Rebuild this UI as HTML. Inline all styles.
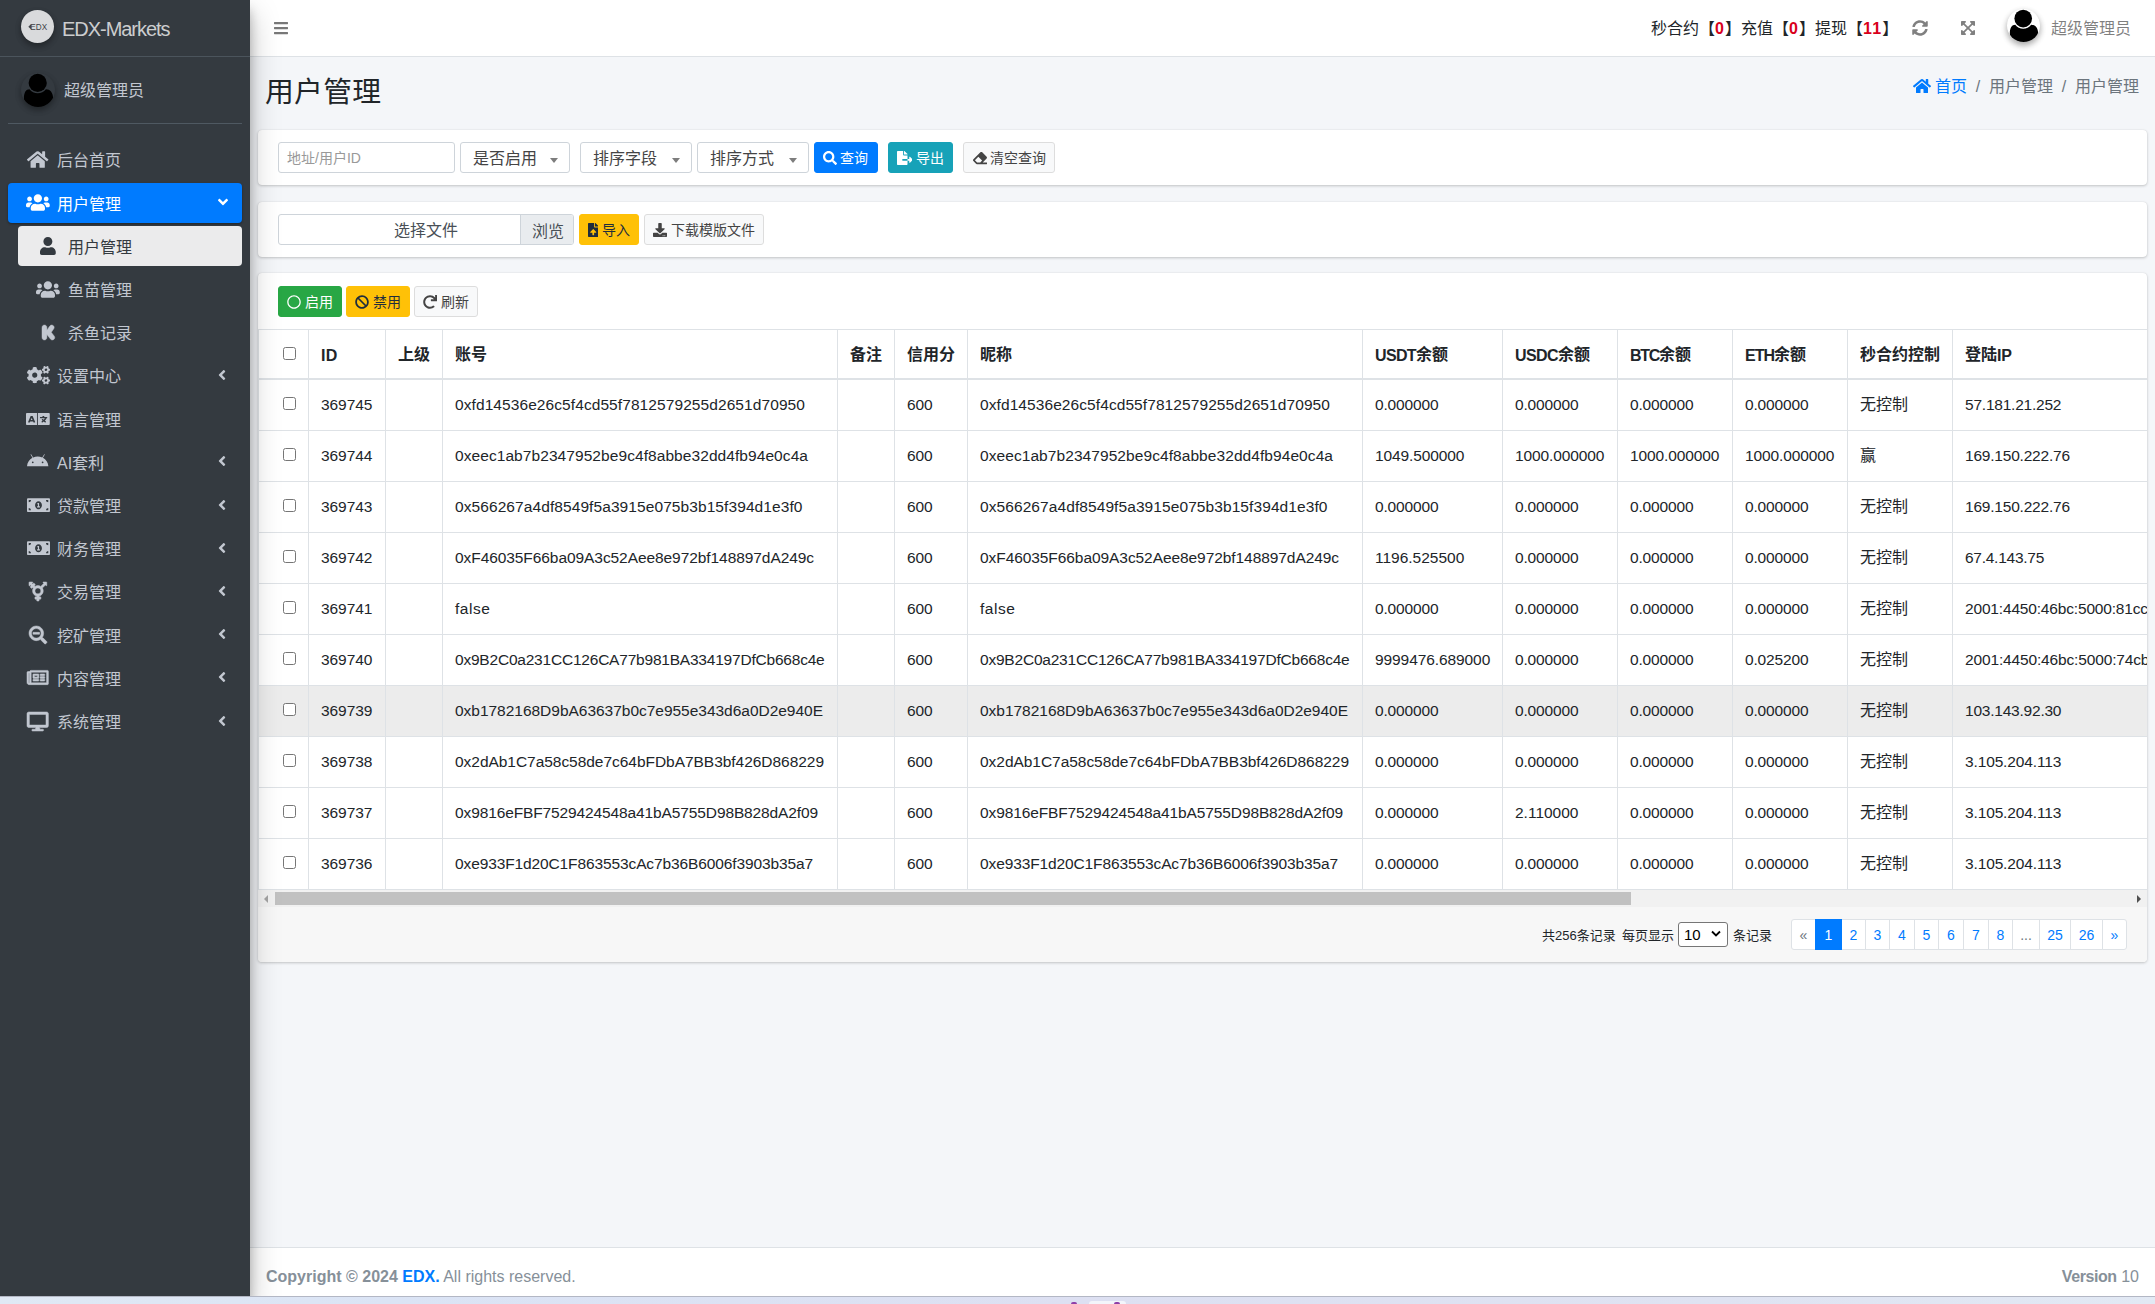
<!DOCTYPE html>
<html lang="zh-CN">
<head>
<meta charset="utf-8">
<title>用户管理</title>
<style>
*{box-sizing:border-box}
html,body{margin:0;padding:0}
body{width:2155px;height:1304px;overflow:hidden;position:relative;background:#f4f6f9;color:#212529;
 font-family:"Liberation Sans","Noto Sans CJK SC",sans-serif;font-size:16px;line-height:1.5}
svg{display:block}
.abs{position:absolute}
/* ---------- sidebar ---------- */
#sidebar{position:absolute;left:0;top:0;width:250px;height:1296px;background:#343a40;z-index:30;
 box-shadow:0 14px 28px rgba(0,0,0,.25),0 10px 10px rgba(0,0,0,.22)}
#brand{position:absolute;left:0;top:0;width:250px;height:57px;border-bottom:1px solid #4b545c}
#brand .logo{position:absolute;left:21px;top:10px;width:33px;height:33px;border-radius:50%;background:#d9dadc;
 box-shadow:0 3px 6px rgba(0,0,0,.16),0 3px 6px rgba(0,0,0,.23)}
#brand .logo span{position:absolute;left:0;top:0;width:33px;height:33px;line-height:33px;text-align:center;font-size:8px;font-weight:bold;color:#444;letter-spacing:-.2px}
#brand .name{position:absolute;left:62px;top:14.400px;font-size:20px;line-height:30px;font-weight:300;color:rgba(255,255,255,.76);white-space:nowrap}
#upanel{position:absolute;left:8px;top:57px;width:234px;height:67px;border-bottom:1px solid #4f5962}
#upanel .av{position:absolute;left:12.500px;top:15.500px;width:34px;height:34px;border-radius:50%;background:#343a40;overflow:hidden;
 box-shadow:0 3px 6px rgba(0,0,0,.16),0 3px 6px rgba(0,0,0,.23)}
#upanel .nm{position:absolute;left:56px;top:22.400px;line-height:24px;color:#c2c7d0;white-space:nowrap}
.nav-i{position:absolute;left:8px;width:234px;height:40px;border-radius:4px;color:#c2c7d0;white-space:nowrap}
.nav-i .ic{position:absolute;left:17px;top:9.500px;width:26px;height:20px;display:flex;align-items:center;justify-content:center}
.nav-i .ic svg{fill:currentColor;overflow:visible}
.nav-i .tx{position:absolute;left:49px;top:9.400px;line-height:24px}
.nav-i .ar{position:absolute;right:16px;top:11px;width:8px;height:16px}
.nav-i .ar svg{height:16px;fill:currentColor}
.nav-i.act{background:#007bff;color:#fff;box-shadow:0 1px 3px rgba(0,0,0,.12),0 1px 2px rgba(0,0,0,.24)}
.nav-i.sub{left:18px;width:224px}
.nav-i.sub .ic{left:17px}
.nav-i.sub .tx{left:50px}
.nav-i.sub.act{background:rgba(255,255,255,.9);color:#343a40;box-shadow:none}
/* ---------- topbar ---------- */
#topbar{position:absolute;left:250px;top:0;width:1905px;height:57px;background:#fff;border-bottom:1px solid #dee2e6;z-index:10}
#topbar .t{position:absolute;white-space:nowrap}
/* ---------- content ---------- */
.card{position:absolute;left:258px;width:1889px;background:#fff;border-radius:4px;
 box-shadow:0 0 1px rgba(0,0,0,.125),0 1px 3px rgba(0,0,0,.2)}
.btn{position:absolute;height:31px;border-radius:3px;font-size:14px;line-height:21px;padding:4px 0 0 0;white-space:nowrap;border:1px solid transparent;text-align:left}
.btn svg{position:absolute;fill:currentColor}
.btn span{position:absolute;top:5px}
.fc{position:absolute;height:31px;border:1px solid #ced4da;border-radius:3px;background:#fff}
#footer{position:absolute;left:250px;top:1247px;width:1905px;height:49px;background:#fff;border-top:1px solid #dee2e6;color:#869099}
#osbar{position:absolute;left:0;top:1296px;width:2155px;height:8px;background:linear-gradient(90deg,#e0e9f5 0,#dbe4f5 18%,#dde0f2 50%,#dfe3f2 80%,#e2e9f4 100%);border-top:1px solid #b3b7c4;z-index:40}
#osbar i{position:absolute;display:block}

#tw{position:absolute;left:0;top:56px;width:1889px;height:561px;overflow:hidden}
#tb{table-layout:fixed;border-collapse:separate;border-spacing:0;width:1889px}
#tb th,#tb td{border-left:1px solid #dee2e6;border-top:1px solid #dee2e6;padding:0 0 0 12px;height:51px;white-space:nowrap;overflow:hidden;text-align:left;vertical-align:middle;color:#212529;font-size:16px;line-height:24px}
#tb th{height:51px;border-bottom:2px solid #dee2e6;font-weight:bold;padding-top:2px}
#tb th .cb{margin-bottom:4px}
#tb tbody tr:first-child td{border-top:0;height:50px}
#tb tbody tr:last-child td{border-bottom:1px solid #dee2e6;height:52px}
#tb tr.hov td{background:#ececec}
.cb{display:block;width:13px;height:13px;border:1px solid #767676;border-radius:2.500px;background:#fff;margin:0 0 3px 12px}
#sb{position:absolute;left:0;top:617px;width:1889px;height:17px;background:#f1f1f1}
#sb .th{position:absolute;left:17px;top:2px;width:1356px;height:13px;background:#c1c1c1}
#sb .al{position:absolute;left:6px;top:4.500px;width:0;height:0;border-top:4px solid transparent;border-bottom:4px solid transparent;border-right:4px solid #a3a3a3}
#sb .arr{position:absolute;right:6px;top:4.500px;width:0;height:0;border-top:4px solid transparent;border-bottom:4px solid transparent;border-left:4px solid #505050}
#cf{position:absolute;left:0;top:634px;width:1889px;height:55px;background:#f7f7f7;border-radius:0 0 4px 4px}
#pg{position:absolute;left:1533px;top:12px;height:31px}
.pi{position:absolute;top:0;height:31px;border:1px solid #dee2e6;background:#fff;color:#007bff;font-size:14px;line-height:31px;text-align:center}
.pi.first{border-radius:3px 0 0 3px}.pi.last{border-radius:0 3px 3px 0}
.pi.dis{color:#6c757d}
.pi.on{background:#007bff;border-color:#007bff;color:#fff;z-index:2}
</style>
</head>
<body>
<!-- SIDEBAR -->
<div id="sidebar">
 <div id="brand"><div class="logo"><svg width="33" height="33" viewBox="0 0 33 33"><polygon points="7.300,16.800 10.200,14 10.200,19.600" fill="#45484d"/><text x="9.300" y="19.800" font-family="Liberation Sans,sans-serif" font-size="8.400" fill="#3f4247" textLength="16.800" lengthAdjust="spacingAndGlyphs">EDX</text></svg></div><div class="name"><span style="letter-spacing:-1.037px">EDX-Markets</span></div></div>
 <div id="upanel">
  <div class="av"><svg width="34" height="34" viewBox="0 0 34 34"><circle cx="16.7" cy="9.9" r="9.1" fill="#000"/><path d="M2.900 25.500C2.900 19.500 5 16.300 8.500 16.300A10.400 10.400 0 0 0 24.900 16.300C29 16.300 32.100 19.500 32.100 25.500C32.100 31 25 34.500 17.500 34.500C10 34.500 2.900 31 2.900 25.500Z" fill="#000"/></svg></div>
  <div class="nm">超级管理员</div>
 </div>
 <div class="nav-i " style="top:140.0px"><div class="ic"><svg width="21.38" height="19" viewBox="0 0 576 512" style="margin:0 auto"><path d="M280.37 148.26L96 300.11V464a16 16 0 0 0 16 16l112.060-.290a16 16 0 0 0 15.920-16V368a16 16 0 0 1 16-16h64a16 16 0 0 1 16 16v95.640a16 16 0 0 0 16 16.050L464 480a16 16 0 0 0 16-16V300L295.670 148.260a12.190 12.190 0 0 0-15.300 0zM571.600 251.470L488 182.560V44.050a12 12 0 0 0-12-12h-56a12 12 0 0 0-12 12v72.610L318.470 43a48 48 0 0 0-61 0L4.340 251.470a12 12 0 0 0-1.600 16.900l25.500 31A12 12 0 0 0 45.150 301l235.220-193.740a12.190 12.190 0 0 1 15.300 0L530.900 301a12 12 0 0 0 16.900-1.600l25.500-31a12 12 0 0 0-1.700-16.930z"/></svg></div><div class="tx">后台首页</div></div>
 <div class="nav-i act" style="top:183.2px"><div class="ic"><svg width="23.75" height="19" viewBox="0 0 640 512" style="margin:0 auto"><path d="M96 224c35.300 0 64-28.700 64-64s-28.700-64-64-64-64 28.700-64 64 28.700 64 64 64zm448 0c35.300 0 64-28.700 64-64s-28.700-64-64-64-64 28.700-64 64 28.700 64 64 64zm32 32h-64c-17.600 0-33.500 7.100-45.100 18.600 40.300 22.100 68.900 62 75.100 109.400h66c17.700 0 32-14.300 32-32v-32c0-35.300-28.700-64-64-64zm-256 0c61.900 0 112-50.100 112-112S381.900 32 320 32 208 82.100 208 144s50.100 112 112 112zm76.800 32h-8.300c-20.800 10-43.900 16-68.500 16s-47.600-6-68.500-16h-8.300C179.600 288 128 339.600 128 403.200V432c0 26.500 21.500 48 48 48h288c26.500 0 48-21.500 48-48v-28.800c0-63.600-51.600-115.200-115.200-115.200zm-223.700-13.400C161.500 263.100 145.600 256 128 256H64c-35.300 0-64 28.700-64 64v32c0 17.700 14.300 32 32 32h65.900c6.300-47.400 34.900-87.300 75.200-109.400z"/></svg></div><div class="tx">用户管理</div><div class="ar" style="right:14px;width:10px"><svg width="10.0" height="16" viewBox="0 0 320 512"><path d="M143 352.3L7 216.3c-9.4-9.4-9.4-24.6 0-33.9l22.6-22.6c9.4-9.4 24.6-9.4 33.9 0l96.4 96.4 96.4-96.4c9.4-9.4 24.6-9.4 33.9 0l22.6 22.6c9.4 9.4 9.4 24.6 0 33.9l-136 136c-9.2 9.4-24.4 9.4-33.800 0z"/></svg></div></div>
 <div class="nav-i sub act" style="top:226.4px"><div class="ic"><svg width="15.75" height="18" viewBox="0 0 448 512" style="margin:0 auto"><path d="M224 256c70.7 0 128-57.3 128-128S294.7 0 224 0 96 57.3 96 128s57.3 128 128 128zm89.6 32h-16.7c-22.2 10.2-46.9 16-72.9 16s-50.600-5.800-72.900-16h-16.700C60.200 288 0 348.200 0 422.400V464c0 26.500 21.500 48 48 48h352c26.500 0 48-21.500 48-48v-41.600c0-74.200-60.200-134.400-134.400-134.400z"/></svg></div><div class="tx">用户管理</div></div>
 <div class="nav-i sub" style="top:269.6px"><div class="ic"><svg width="23.75" height="19" viewBox="0 0 640 512" style="margin:0 auto"><path d="M96 224c35.300 0 64-28.700 64-64s-28.700-64-64-64-64 28.700-64 64 28.700 64 64 64zm448 0c35.300 0 64-28.700 64-64s-28.700-64-64-64-64 28.700-64 64 28.700 64 64 64zm32 32h-64c-17.600 0-33.500 7.100-45.100 18.600 40.300 22.100 68.900 62 75.100 109.400h66c17.700 0 32-14.300 32-32v-32c0-35.300-28.700-64-64-64zm-256 0c61.900 0 112-50.100 112-112S381.900 32 320 32 208 82.100 208 144s50.100 112 112 112zm76.800 32h-8.300c-20.800 10-43.900 16-68.500 16s-47.600-6-68.500-16h-8.300C179.600 288 128 339.600 128 403.200V432c0 26.500 21.500 48 48 48h288c26.500 0 48-21.500 48-48v-28.800c0-63.600-51.600-115.200-115.200-115.200zm-223.700-13.400C161.500 263.100 145.600 256 128 256H64c-35.300 0-64 28.700-64 64v32c0 17.700 14.300 32 32 32h65.900c6.300-47.400 34.900-87.300 75.200-109.400z"/></svg></div><div class="tx">鱼苗管理</div></div>
 <div class="nav-i sub" style="top:312.8px"><div class="ic"><svg width="12.75" height="17" viewBox="0 0 384 512" style="margin:0 auto"><path stroke="currentColor" stroke-width="14" d="M147.300 114.400c0-56.200-32.500-82.400-73.400-82.400C26.200 32 0 68.200 0 113.400v283c0 47.300 25.300 83.400 74.900 83.400 39.800 0 72.400-25.600 72.400-83.400v-76.500l112.100 138.300c22.700 27.200 72.100 30.700 103.200 0 27-27.600 27.300-67.400 7.400-92.200l-90.800-114.800 74.900-107.400c17.400-24.700 17.500-63.100-10.400-89.800-30.300-29-82.400-31.600-113.600 12.800L147.300 185v-70.600z"/></svg></div><div class="tx">杀鱼记录</div></div>
 <div class="nav-i " style="top:356.0px"><div class="ic"><svg width="23.0" height="18.4" viewBox="0 0 640 512" style="margin:0 auto"><path d="M512.100 191l-8.200 14.300c-3 5.300-9.400 7.500-15.100 5.400-11.800-4.400-22.600-10.700-32.100-18.600-4.600-3.800-5.800-10.500-2.800-15.700l8.200-14.300c-6.900-8-12.300-17.300-15.900-27.400h-16.500c-6 0-11.200-4.300-12.200-10.300-2-12-2.100-24.600 0-37.100 1-6 6.200-10.400 12.200-10.400h16.500c3.600-10.100 9-19.400 15.900-27.400l-8.200-14.300c-3-5.200-1.900-11.900 2.800-15.700 9.500-7.900 20.400-14.200 32.100-18.600 5.700-2.100 12.100.1 15.100 5.400l8.200 14.300c10.500-1.900 21.200-1.900 31.700 0L552 6.300c3-5.300 9.400-7.500 15.100-5.400 11.800 4.400 22.600 10.700 32.100 18.600 4.600 3.800 5.800 10.500 2.800 15.700l-8.200 14.300c6.900 8 12.300 17.300 15.900 27.400h16.500c6 0 11.200 4.300 12.200 10.300 2 12 2.100 24.600 0 37.100-1 6-6.200 10.400-12.200 10.400h-16.500c-3.600 10.100-9 19.400-15.900 27.400l8.200 14.300c3 5.200 1.900 11.900-2.800 15.700-9.500 7.900-20.400 14.200-32.100 18.600-5.700 2.100-12.100-.1-15.100-5.400l-8.200-14.300c-10.400 1.900-21.200 1.900-31.700 0zm-10.500-58.800c38.500 29.600 82.400-14.300 52.800-52.800-38.500-29.700-82.400 14.300-52.800 52.800zM386.300 286.100l33.700 16.800c10.100 5.800 14.500 18.100 10.500 29.100-8.900 24.200-26.400 46.400-42.600 65.800-7.400 8.900-20.200 11.100-30.300 5.300l-29.100-16.800c-16 13.700-34.600 24.600-54.900 31.700v33.600c0 11.600-8.300 21.600-19.700 23.600-24.600 4.200-50.400 4.400-75.900 0-11.500-2-20-11.900-20-23.600V418c-20.300-7.200-38.900-18-54.900-31.700L74 403c-10 5.800-22.900 3.600-30.300-5.300-16.200-19.400-33.300-41.600-42.200-65.700-4-10.900.4-23.200 10.500-29.100l33.300-16.800c-3.900-20.900-3.900-42.400 0-63.400L12 205.800c-10.100-5.800-14.600-18.100-10.500-29 8.900-24.200 26-46.400 42.200-65.800 7.400-8.900 20.200-11.100 30.300-5.300l29.100 16.800c16-13.700 34.600-24.600 54.900-31.700V57.100c0-11.500 8.200-21.500 19.600-23.500 24.600-4.200 50.500-4.400 76-.1 11.500 2 20 11.900 20 23.600v33.600c20.300 7.200 38.900 18 54.900 31.700l29.100-16.800c10-5.800 22.900-3.600 30.300 5.300 16.200 19.400 33.200 41.600 42.100 65.800 4 10.900.1 23.200-10 29.100l-33.700 16.800c3.900 21 3.900 42.500 0 63.500zm-117.600 21.100c59.200-77-28.700-164.900-105.700-105.700-59.200 77 28.700 164.900 105.700 105.700zm243.400 182.700l-8.200 14.300c-3 5.300-9.400 7.500-15.100 5.400-11.800-4.400-22.600-10.700-32.100-18.600-4.600-3.800-5.800-10.500-2.800-15.700l8.200-14.300c-6.900-8-12.300-17.300-15.900-27.400h-16.500c-6 0-11.200-4.300-12.200-10.300-2-12-2.100-24.600 0-37.100 1-6 6.200-10.400 12.200-10.400h16.500c3.600-10.100 9-19.400 15.900-27.400l-8.200-14.300c-3-5.200-1.900-11.900 2.800-15.700 9.500-7.900 20.400-14.200 32.100-18.600 5.700-2.100 12.100.1 15.100 5.400l8.200 14.300c10.500-1.900 21.200-1.900 31.700 0l8.200-14.300c3-5.300 9.400-7.500 15.100-5.400 11.800 4.400 22.600 10.700 32.100 18.600 4.600 3.800 5.800 10.500 2.800 15.700l-8.200 14.300c6.900 8 12.300 17.300 15.900 27.400h16.500c6 0 11.200 4.300 12.200 10.300 2 12 2.100 24.600 0 37.100-1 6-6.200 10.400-12.200 10.400h-16.500c-3.600 10.100-9 19.400-15.900 27.400l8.200 14.300c3 5.200 1.900 11.900-2.800 15.700-9.500 7.900-20.400 14.200-32.100 18.600-5.700 2.100-12.100-.1-15.100-5.400l-8.200-14.300c-10.400 1.900-21.200 1.900-31.700 0zM501.600 431c38.500 29.600 82.400-14.300 52.800-52.800-38.500-29.600-82.400 14.300-52.800 52.800z"/></svg></div><div class="tx">设置中心</div><div class="ar"><svg width="8.0" height="16" viewBox="0 0 256 512"><path d="M31.7 239l136-136c9.4-9.4 24.6-9.4 33.9 0l22.6 22.6c9.4 9.4 9.4 24.6 0 33.9L127.9 256l96.4 96.4c9.4 9.4 9.4 24.6 0 33.9L201.7 409c-9.4 9.4-24.6 9.4-33.9 0l-136-136c-9.5-9.4-9.5-24.6-.1-34z"/></svg></div></div>
 <div class="nav-i " style="top:399.2px"><div class="ic"><svg width="23.75" height="15.96" viewBox="0 0 640 512" preserveAspectRatio="none" style="margin:0 auto"><path fill-rule="evenodd" d="M24 64h272v384H24c-13.300 0-24-10.700-24-24V88c0-13.300 10.700-24 24-24zM616 64H320v384h296c13.300 0 24-10.700 24-24V88c0-13.300-10.700-24-24-24zM134 160h36c5 0 9.600 3.200 11.300 7.900l66 184c2.800 7.800-3 16.100-11.300 16.100h-24.700c-5.200 0-9.800-3.300-11.400-8.300L191.700 336h-79.400l-8.200 23.700c-1.600 5-6.200 8.300-11.400 8.300H68c-8.300 0-14.100-8.300-11.300-16.100l66-184c1.700-4.700 6.300-7.900 11.300-7.900zm18 62.200L127.600 292h48.800L152 222.200zM456 160h24c6.600 0 12 5.400 12 12v20h68c6.600 0 12 5.400 12 12v16c0 6.600-5.400 12-12 12h-6.400c-9 27-24.600 54-46 78.600 8.800 8.200 18 16 27.500 23.100 4.900 3.700 6.200 10.500 3.100 15.700l-8.100 13.900c-3.600 6.200-11.800 7.900-17.600 3.600-12.500-9.200-24.100-18.800-34.900-28.800-10.800 10-22.500 19.600-34.900 28.800-5.800 4.300-14 2.600-17.600-3.600l-8.100-13.900c-3.100-5.300-1.700-12 3.200-15.700 9.800-7.400 19-15.100 27.600-23.100-8.400-9.600-15.800-19.600-22.300-29.700-4-6.300-1.100-14.700 5.900-17.200l14.500-5.200c5.100-1.800 10.800 0 13.900 4.500 4.800 7.100 10.200 14.100 16.200 20.900 14-16.500 24.700-34.100 31.800-51.900H388c-6.600 0-12-5.400-12-12v-16c0-6.600 5.400-12 12-12h56v-20c0-6.600 5.400-12 12-12z"/></svg></div><div class="tx">语言管理</div></div>
 <div class="nav-i " style="top:442.4px"><div class="ic"><svg width="21.38" height="19" viewBox="0 0 576 512" style="margin:0 auto"><path d="M420.550 301.930a24 24 0 1 1 24-24 24 24 0 0 1-24 24m-265.100 0a24 24 0 1 1 24-24 24 24 0 0 1-24 24m273.700-144.480l47.940-83a10 10 0 1 0-17.270-10l-48.540 84.070a301.250 301.250 0 0 0-246.560 0l-48.540-84.070a10 10 0 1 0-17.270 10l47.940 83C64.530 202.220 8.240 285.550 0 384h576c-8.240-98.450-64.540-181.780-146.850-226.550"/></svg></div><div class="tx">AI套利</div><div class="ar"><svg width="8.0" height="16" viewBox="0 0 256 512"><path d="M31.7 239l136-136c9.4-9.4 24.6-9.4 33.9 0l22.6 22.6c9.4 9.4 9.4 24.6 0 33.9L127.9 256l96.4 96.4c9.4 9.4 9.4 24.6 0 33.9L201.7 409c-9.4 9.4-24.6 9.4-33.9 0l-136-136c-9.5-9.4-9.5-24.6-.1-34z"/></svg></div></div>
 <div class="nav-i " style="top:485.6px"><div class="ic"><svg width="23.0" height="18.4" viewBox="0 0 640 512" style="margin:0 auto"><path d="M352 288h-16v-88c0-4.420-3.580-8-8-8h-13.580c-4.740 0-9.370 1.400-13.310 4.030l-15.330 10.220a7.994 7.994 0 0 0-2.220 11.090l8.880 13.310a7.994 7.994 0 0 0 11.090 2.220l.470-.310V288h-16c-4.420 0-8 3.580-8 8v16c0 4.420 3.580 8 8 8h64c4.420 0 8-3.580 8-8v-16c0-4.420-3.580-8-8-8zM608 64H32C14.330 64 0 78.330 0 96v320c0 17.670 14.330 32 32 32h576c17.670 0 32-14.330 32-32V96c0-17.670-14.330-32-32-32zM48 400v-64c35.350 0 64 28.650 64 64H48zm0-224v-64h64c0 35.350-28.650 64-64 64zm272 192c-53.020 0-96-50.150-96-112 0-61.860 42.980-112 96-112s96 50.140 96 112c0 61.870-43 112-96 112zm272 32h-64c0-35.350 28.650-64 64-64v64zm0-224c-35.350 0-64-28.650-64-64h64v64z"/></svg></div><div class="tx">贷款管理</div><div class="ar"><svg width="8.0" height="16" viewBox="0 0 256 512"><path d="M31.7 239l136-136c9.4-9.4 24.6-9.4 33.9 0l22.6 22.6c9.4 9.4 9.4 24.6 0 33.9L127.9 256l96.4 96.4c9.4 9.4 9.4 24.6 0 33.9L201.7 409c-9.4 9.4-24.6 9.4-33.9 0l-136-136c-9.5-9.4-9.5-24.6-.1-34z"/></svg></div></div>
 <div class="nav-i " style="top:528.8px"><div class="ic"><svg width="23.0" height="18.4" viewBox="0 0 640 512" style="margin:0 auto"><path d="M352 288h-16v-88c0-4.420-3.580-8-8-8h-13.580c-4.740 0-9.370 1.400-13.310 4.030l-15.330 10.220a7.994 7.994 0 0 0-2.220 11.090l8.880 13.310a7.994 7.994 0 0 0 11.090 2.220l.470-.310V288h-16c-4.420 0-8 3.580-8 8v16c0 4.420 3.580 8 8 8h64c4.420 0 8-3.580 8-8v-16c0-4.420-3.580-8-8-8zM608 64H32C14.330 64 0 78.330 0 96v320c0 17.670 14.330 32 32 32h576c17.670 0 32-14.330 32-32V96c0-17.670-14.330-32-32-32zM48 400v-64c35.350 0 64 28.650 64 64H48zm0-224v-64h64c0 35.350-28.650 64-64 64zm272 192c-53.020 0-96-50.150-96-112 0-61.860 42.980-112 96-112s96 50.140 96 112c0 61.870-43 112-96 112zm272 32h-64c0-35.350 28.650-64 64-64v64zm0-224c-35.350 0-64-28.650-64-64h64v64z"/></svg></div><div class="tx">财务管理</div><div class="ar"><svg width="8.0" height="16" viewBox="0 0 256 512"><path d="M31.7 239l136-136c9.4-9.4 24.6-9.4 33.9 0l22.6 22.6c9.4 9.4 9.4 24.6 0 33.9L127.9 256l96.4 96.4c9.4 9.4 9.4 24.6 0 33.9L201.7 409c-9.4 9.4-24.6 9.4-33.9 0l-136-136c-9.5-9.4-9.5-24.6-.1-34z"/></svg></div></div>
 <div class="nav-i " style="top:572.0px"><div class="ic"><svg width="17.81" height="19" viewBox="0 0 480 512" style="margin:0 auto"><path stroke="currentColor" stroke-width="14" d="M468 0h-79c-10.700 0-16 12.900-8.500 20.500l16.900 16.900-80.700 80.700C294.500 103.300 268.500 96 240 96c-28.600 0-54.600 7.300-76.800 22.100l-16.500-16.500 19.800-19.800c4.700-4.700 4.700-12.300 0-17l-28.300-28.300c-4.700-4.700-12.300-4.700-17 0l-19.800 19.800-19-19 16.900-16.900C107.100 12.900 101.700 0 91 0H12C5.400 0 0 5.400 0 12v79c0 10.700 12.900 16 20.500 8.500l16.900-16.900 19 19-19.800 19.800c-4.700 4.700-4.700 12.300 0 17l28.300 28.300c4.700 4.700 12.300 4.700 17 0l19.800-19.800 16.500 16.500C103.500 185.500 96 211.500 96 240c0 68.500 47.900 125.900 112 140.400V400h-36c-6.600 0-12 5.400-12 12v40c0 6.600 5.400 12 12 12h36v36c0 6.600 5.400 12 12 12h40c6.600 0 12-5.400 12-12v-36h36c6.600 0 12-5.400 12-12v-40c0-6.600-5.400-12-12-12h-36v-19.600c64.100-14.600 112-71.900 112-140.400 0-28.500-8.300-55-22.600-77.300l80.700-80.700 16.900 16.900c7.600 7.600 20.500 2.200 20.500-8.500V12c0-6.600-5.400-12-12-12zM240 320c-44.100 0-80-35.900-80-80s35.900-80 80-80 80 35.900 80 80-35.900 80-80 80z"/></svg></div><div class="tx">交易管理</div><div class="ar"><svg width="8.0" height="16" viewBox="0 0 256 512"><path d="M31.7 239l136-136c9.4-9.4 24.6-9.4 33.9 0l22.6 22.6c9.4 9.4 9.4 24.6 0 33.9L127.9 256l96.4 96.4c9.4 9.4 9.4 24.6 0 33.9L201.7 409c-9.4 9.4-24.6 9.4-33.9 0l-136-136c-9.5-9.4-9.5-24.6-.1-34z"/></svg></div></div>
 <div class="nav-i " style="top:615.2px"><div class="ic"><svg width="18.0" height="18" viewBox="0 0 512 512" style="margin:0 auto"><path stroke="currentColor" stroke-width="14" d="M304 192v32c0 6.600-5.400 12-12 12H124c-6.600 0-12-5.400-12-12v-32c0-6.600 5.400-12 12-12h168c6.600 0 12 5.400 12 12zm201 284.700L476.700 505c-9.400 9.400-24.600 9.400-33.900 0L343 405.300c-4.500-4.500-7-10.600-7-17V372c-35.300 27.600-79.700 44-128 44C93.100 416 0 322.900 0 208S93.100 0 208 0s208 93.100 208 208c0 48.300-16.400 92.700-44 128h16.300c6.400 0 12.500 2.500 17 7l99.700 99.700c9.300 9.400 9.300 24.600 0 34zM344 208c0-75.200-60.800-136-136-136S72 132.800 72 208s60.800 136 136 136 136-60.800 136-136z"/></svg></div><div class="tx">挖矿管理</div><div class="ar"><svg width="8.0" height="16" viewBox="0 0 256 512"><path d="M31.7 239l136-136c9.4-9.4 24.6-9.4 33.9 0l22.6 22.6c9.4 9.4 9.4 24.6 0 33.9L127.9 256l96.4 96.4c9.4 9.4 9.4 24.6 0 33.9L201.7 409c-9.4 9.4-24.6 9.4-33.9 0l-136-136c-9.5-9.4-9.5-24.6-.1-34z"/></svg></div></div>
 <div class="nav-i " style="top:658.4px"><div class="ic"><svg width="21.38" height="19" viewBox="0 0 576 512" style="margin:0 auto"><path stroke="currentColor" stroke-width="14" d="M552 64H112c-20.858 0-38.643 13.377-45.248 32H24c-13.255 0-24 10.745-24 24v272c0 30.928 25.072 56 56 56h496c13.255 0 24-10.745 24-24V88c0-13.255-10.745-24-24-24zM48 392V144h16v248c0 4.411-3.589 8-8 8s-8-3.589-8-8zm480 8H111.422c.374-2.614.578-5.283.578-8V112h416v288zM172 280h136c6.627 0 12-5.373 12-12v-96c0-6.627-5.373-12-12-12H172c-6.627 0-12 5.373-12 12v96c0 6.627 5.373 12 12 12zm28-80h80v40h-80v-40zm-40 140v-24c0-6.627 5.373-12 12-12h136c6.627 0 12 5.373 12 12v24c0 6.627-5.373 12-12 12H172c-6.627 0-12-5.373-12-12zm192 0v-24c0-6.627 5.373-12 12-12h104c6.627 0 12 5.373 12 12v24c0 6.627-5.373 12-12 12H364c-6.627 0-12-5.373-12-12zm0-144v-24c0-6.627 5.373-12 12-12h104c6.627 0 12 5.373 12 12v24c0 6.627-5.373 12-12 12H364c-6.627 0-12-5.373-12-12zm0 72v-24c0-6.627 5.373-12 12-12h104c6.627 0 12 5.373 12 12v24c0 6.627-5.373 12-12 12H364c-6.627 0-12-5.373-12-12z"/></svg></div><div class="tx">内容管理</div><div class="ar"><svg width="8.0" height="16" viewBox="0 0 256 512"><path d="M31.7 239l136-136c9.4-9.4 24.6-9.4 33.9 0l22.6 22.6c9.4 9.4 9.4 24.6 0 33.9L127.9 256l96.4 96.4c9.4 9.4 9.4 24.6 0 33.9L201.7 409c-9.4 9.4-24.6 9.4-33.9 0l-136-136c-9.5-9.4-9.5-24.6-.1-34z"/></svg></div></div>
 <div class="nav-i " style="top:701.6px"><div class="ic"><svg width="21.38" height="19" viewBox="0 0 576 512" style="margin:0 auto"><path stroke="currentColor" stroke-width="14" d="M528 0H48C21.500 0 0 21.500 0 48v320c0 26.500 21.500 48 48 48h192l-16 48h-72c-13.300 0-24 10.700-24 24s10.700 24 24 24h272c13.300 0 24-10.700 24-24s-10.700-24-24-24h-72l-16-48h192c26.500 0 48-21.500 48-48V48c0-26.500-21.500-48-48-48zm-16 352H64V64h448v288z"/></svg></div><div class="tx">系统管理</div><div class="ar"><svg width="8.0" height="16" viewBox="0 0 256 512"><path d="M31.7 239l136-136c9.4-9.4 24.6-9.4 33.9 0l22.6 22.6c9.4 9.4 9.4 24.6 0 33.9L127.9 256l96.4 96.4c9.4 9.4 9.4 24.6 0 33.9L201.7 409c-9.4 9.4-24.6 9.4-33.9 0l-136-136c-9.5-9.4-9.5-24.6-.1-34z"/></svg></div></div>
</div>
<!-- TOPBAR -->
<div id="topbar">
 <div class="abs" style="left:24px;top:20px;color:rgba(0,0,0,.55)"><svg width="14.0" height="16" viewBox="0 0 448 512" fill="#787878"><path d="M16 132h416c8.837 0 16-7.163 16-16V76c0-8.837-7.163-16-16-16H16C7.163 60 0 67.163 0 76v40c0 8.837 7.163 16 16 16zm0 160h416c8.837 0 16-7.163 16-16v-40c0-8.837-7.163-16-16-16H16c-8.837 0-16 7.163-16 16v40c0 8.837 7.163 16 16 16zm0 160h416c8.837 0 16-7.163 16-16v-40c0-8.837-7.163-16-16-16H16c-8.837 0-16 7.163-16 16v40c0 8.837 7.163 16 16 16z"/></svg></div>
 <div class="t" style="left:1401px;top:17.400px;line-height:24px;color:#212529">秒合约【<b style="color:#d9001b;letter-spacing:1.100px">0</b>】充值【<b style="color:#d9001b;letter-spacing:1.100px">0</b>】提现【<b style="color:#d9001b;letter-spacing:1.100px">11</b>】</div>
 <div class="abs" style="left:1662px;top:20px"><svg width="16.0" height="16" viewBox="0 0 512 512" fill="#808080"><path d="M370.720 133.280C339.458 104.008 298.888 87.962 255.848 88c-77.458.068-144.328 53.178-162.791 126.850-1.344 5.363-6.122 9.150-11.651 9.150H24.103c-7.498 0-13.194-6.807-11.807-14.176C33.933 94.924 134.813 8 256 8c66.448 0 126.791 26.136 171.315 68.685L463.030 40.970C478.149 25.851 504 36.559 504 57.941V192c0 13.255-10.745 24-24 24H345.941c-21.382 0-32.090-25.851-16.971-40.971l41.750-41.749zM32 296h134.059c21.382 0 32.090 25.851 16.971 40.971l-41.750 41.750c31.262 29.273 71.835 45.319 114.876 45.280 77.418-.070 144.315-53.144 162.787-126.849 1.344-5.363 6.122-9.150 11.651-9.150h57.304c7.498 0 13.194 6.807 11.807 14.176C478.067 417.076 377.187 504 256 504c-66.448 0-126.791-26.136-171.315-68.685L48.970 471.030C33.851 486.149 8 475.441 8 454.059V320c0-13.255 10.745-24 24-24z"/></svg></div>
 <div class="abs" style="left:1711px;top:20px"><svg width="14.0" height="16" viewBox="0 0 448 512" fill="#808080"><path d="M448 344v112a23.940 23.940 0 0 1-24 24H312c-21.390 0-32.090-25.900-17-41l36.200-36.200L224 295.600 116.770 402.900 153 439c15.090 15.100 4.390 41-17 41H24a23.940 23.940 0 0 1-24-24V344c0-21.400 25.890-32.100 41-17l36.190 36.200L184.460 256 77.180 148.700 41 185c-15.100 15.100-41 4.400-41-17V56a23.940 23.940 0 0 1 24-24h112c21.390 0 32.090 25.900 17 41l-36.200 36.200L224 216.400l107.230-107.300L295 73c-15.090-15.100-4.390-41 17-41h112a23.940 23.940 0 0 1 24 24v112c0 21.400-25.890 32.100-41 17l-36.190-36.200L263.540 256l107.280 107.300L407 327.100c15.100-15.200 41-4.500 41 16.900z"/></svg></div>
 <div class="abs" style="left:1757px;top:9px;width:33px;height:33px;border-radius:50%;background:#fff;overflow:hidden;box-shadow:0 3px 6px rgba(0,0,0,.16),0 3px 6px rgba(0,0,0,.23)"><svg width="33" height="33" viewBox="0 0 34 34"><circle cx="16.7" cy="9.9" r="9.1" fill="#000"/><path d="M2.900 25.500C2.900 19.500 5 16.300 8.500 16.300A10.400 10.400 0 0 0 24.900 16.300C29 16.300 32.100 19.500 32.100 25.500C32.100 31 25 34.500 17.500 34.500C10 34.500 2.900 31 2.900 25.500Z" fill="#000"/></svg></div>
 <div class="t" style="left:1801px;top:17.400px;line-height:24px;color:rgba(0,0,0,.5)">超级管理员</div>
</div>
<div class="abs" style="left:265px;top:71.300px;font-size:28.8px;line-height:42px;color:#212529;white-space:nowrap;letter-spacing:.3px">用户管理</div>
<div class="abs" style="left:1913px;top:78px"><svg width="18.0" height="16" viewBox="0 0 576 512" fill="#007bff"><path d="M280.37 148.26L96 300.11V464a16 16 0 0 0 16 16l112.060-.290a16 16 0 0 0 15.920-16V368a16 16 0 0 1 16-16h64a16 16 0 0 1 16 16v95.640a16 16 0 0 0 16 16.050L464 480a16 16 0 0 0 16-16V300L295.670 148.260a12.190 12.190 0 0 0-15.300 0zM571.600 251.470L488 182.560V44.050a12 12 0 0 0-12-12h-56a12 12 0 0 0-12 12v72.610L318.470 43a48 48 0 0 0-61 0L4.340 251.470a12 12 0 0 0-1.600 16.900l25.500 31A12 12 0 0 0 45.150 301l235.220-193.740a12.190 12.190 0 0 1 15.300 0L530.900 301a12 12 0 0 0 16.900-1.600l25.500-31a12 12 0 0 0-1.700-16.930z"/></svg></div>
<div class="abs" style="left:1935px;top:75.300px;line-height:24px;white-space:nowrap;color:#6c757d"><span style="color:#007bff">首页</span><span style="display:inline-block;width:22px;text-align:center">/</span>用户管理<span style="display:inline-block;width:22px;text-align:center">/</span>用户管理</div>
<div class="card" style="top:130px;height:55px"><div class="fc" style="left:20px;top:12px;width:177px"><div class="abs" style="left:8px;top:5px;font-size:14px;line-height:21px;color:#999;white-space:nowrap">地址/用户ID</div></div><div class="fc" style="left:202px;top:12px;width:110px"><div class="abs" style="left:12px;top:3.500px;line-height:24px;color:#444;white-space:nowrap">是否启用</div><div class="abs" style="right:11px;top:15px;width:0;height:0;border-left:4px solid transparent;border-right:4px solid transparent;border-top:5px solid #7d7d7d"></div></div><div class="fc" style="left:322px;top:12px;width:112px"><div class="abs" style="left:12px;top:3.500px;line-height:24px;color:#444;white-space:nowrap">排序字段</div><div class="abs" style="right:11px;top:15px;width:0;height:0;border-left:4px solid transparent;border-right:4px solid transparent;border-top:5px solid #7d7d7d"></div></div><div class="fc" style="left:439px;top:12px;width:112px"><div class="abs" style="left:12px;top:3.500px;line-height:24px;color:#444;white-space:nowrap">排序方式</div><div class="abs" style="right:11px;top:15px;width:0;height:0;border-left:4px solid transparent;border-right:4px solid transparent;border-top:5px solid #7d7d7d"></div></div><div class="btn" style="left:556px;top:12px;width:64px;background:#007bff;border-color:#007bff;color:#fff"><svg width="14.0" height="14" viewBox="0 0 512 512" style="left:8px;top:7.5px"><path d="M505 442.700L405.300 343c-4.500-4.500-10.600-7-17-7H372c27.600-35.300 44-79.700 44-128C416 93.100 322.900 0 208 0S0 93.100 0 208s93.100 208 208 208c48.300 0 92.700-16.400 128-44v16.300c0 6.400 2.500 12.500 7 17l99.700 99.700c9.400 9.400 24.600 9.400 33.900 0l28.300-28.300c9.400-9.400 9.400-24.600.1-34zM208 336c-70.700 0-128-57.200-128-128 0-70.700 57.200-128 128-128 70.700 0 128 57.200 128 128 0 70.700-57.200 128-128 128z"/></svg><span style="left:25px">查询</span></div><div class="btn" style="left:630px;top:12px;width:65px;background:#17a2b8;border-color:#17a2b8;color:#fff"><svg width="15.75" height="14" viewBox="0 0 576 512" style="left:7.5px;top:7.5px"><path d="M384 121.900c0-6.300-2.500-12.400-7-16.900L279.100 7c-4.500-4.500-10.600-7-17-7H256v128h128v-6.100zM571 308l-95.700-96.400c-10.100-10.100-27.400-3-27.400 11.300V288h-64v64h64v65.200c0 14.300 17.300 21.400 27.400 11.300L571 332c6.600-6.600 6.600-17.400 0-24zm-379 28v-32c0-8.800 7.200-16 16-16h176V160H248c-13.200 0-24-10.800-24-24V0H24C10.700 0 0 10.700 0 24v464c0 13.300 10.700 24 24 24h336c13.300 0 24-10.700 24-24V352H208c-8.800 0-16-7.200-16-16z"/></svg><span style="left:27px">导出</span></div><div class="btn" style="left:705px;top:12px;width:92px;background:#f8f9fa;border-color:#ddd;color:#444"><svg width="14.0" height="14" viewBox="0 0 512 512" style="left:8.5px;top:7.5px"><path d="M497.941 273.941c18.745-18.745 18.745-49.137 0-67.882l-160-160c-18.745-18.745-49.136-18.746-67.883 0l-256 256c-18.745 18.745-18.745 49.137 0 67.882l96 96A48.004 48.004 0 0 0 144 480h356c6.627 0 12-5.373 12-12v-40c0-6.627-5.373-12-12-12H355.883l142.058-142.059zm-302.627-62.627l137.373 137.373L265.373 416H150.628l-80-80 124.686-124.686z"/></svg><span style="left:26px">清空查询</span></div></div>
<div class="card" style="top:202px;height:55px"><div class="fc" style="left:20px;top:12px;width:296px;overflow:hidden"><div class="abs" style="left:0;top:3px;width:294px;text-align:center;line-height:26px;color:#495057">选择文件</div><div class="abs" style="left:241px;top:-1px;width:55px;height:31px;background:#e9ecef;border-left:1px solid #ced4da;text-align:center;line-height:36px;color:#495057">浏览</div></div><div class="btn" style="left:321px;top:12px;width:60px;background:#ffc107;border-color:#ffc107;color:#1f2d3d"><svg width="10.5" height="14" viewBox="0 0 384 512" style="left:7.5px;top:7.5px"><path d="M224 136V0H24C10.700 0 0 10.700 0 24v464c0 13.300 10.700 24 24 24h336c13.300 0 24-10.700 24-24V160H248c-13.200 0-24-10.800-24-24zm65.180 216.010H224v80c0 8.840-7.160 16-16 16h-32c-8.840 0-16-7.160-16-16v-80H94.820c-14.280 0-21.410-17.290-11.270-27.360l96.420-95.700c6.650-6.610 17.390-6.610 24.040 0l96.420 95.700c10.150 10.070 3.030 27.360-11.250 27.360zM377 105L279.100 7c-4.500-4.500-10.600-7-17-7H256v128h128v-6.100c0-6.300-2.500-12.400-7-16.900z"/></svg><span style="left:22px">导入</span></div><div class="btn" style="left:386px;top:12px;width:120px;background:#f8f9fa;border-color:#ddd;color:#444"><svg width="14.0" height="14" viewBox="0 0 512 512" style="left:8px;top:7.5px"><path d="M216 0h80c13.300 0 24 10.700 24 24v168h87.700c17.800 0 26.700 21.500 14.100 34.100L269.700 378.300c-7.500 7.500-19.800 7.500-27.300 0L90.100 226.100c-12.600-12.600-3.700-34.100 14.100-34.100H192V24c0-13.300 10.700-24 24-24zm296 376v112c0 13.300-10.700 24-24 24H24c-13.300 0-24-10.700-24-24V376c0-13.300 10.700-24 24-24h146.700l49 49c20.100 20.100 52.500 20.100 72.600 0l49-49H488c13.300 0 24 10.700 24 24zm-124 88c0-11-9-20-20-20s-20 9-20 20 9 20 20 20 20-9 20-20zm64 0c0-11-9-20-20-20s-20 9-20 20 9 20 20 20 20-9 20-20z"/></svg><span style="left:26px">下载模版文件</span></div></div>
<div class="card" style="top:273px;height:689px"><div class="btn" style="left:20px;top:13px;width:64px;background:#28a745;border-color:#28a745;color:#fff"><svg width="14.0" height="14" viewBox="0 0 512 512" style="left:7.5px;top:7.5px"><path d="M256 8C119 8 8 119 8 256s111 248 248 248 248-111 248-248S393 8 256 8zm0 448c-110.500 0-200-89.500-200-200S145.500 56 256 56s200 89.500 200 200-89.500 200-200 200z"/></svg><span style="left:26px">启用</span></div><div class="btn" style="left:88px;top:13px;width:64px;background:#ffc107;border-color:#ffc107;color:#1f2d3d"><svg width="14.0" height="14" viewBox="0 0 512 512" style="left:8px;top:7.5px"><path d="M256 8C119.034 8 8 119.033 8 256s111.034 248 248 248 248-111.034 248-248S392.967 8 256 8zm130.108 117.892c65.448 65.448 70 165.481 20.677 235.637L150.470 105.216c70.204-49.356 170.226-44.735 235.638 20.676zM125.892 386.108c-65.448-65.448-70-165.481-20.677-235.637L361.530 406.784c-70.203 49.356-170.226 44.736-235.638-20.676z"/></svg><span style="left:26px">禁用</span></div><div class="btn" style="left:156px;top:13px;width:64px;background:#f8f9fa;border-color:#ddd;color:#444"><svg width="14.0" height="14" viewBox="0 0 512 512" style="left:8px;top:7.5px"><path d="M500.330 0h-47.410a12 12 0 0 0-12 12.570l4 82.760A247.420 247.420 0 0 0 256 8C119.340 8 7.900 119.530 8 256.190 8.100 393.070 119.100 504 256 504a247.100 247.100 0 0 0 166.180-63.910 12 12 0 0 0 .480-17.430l-34-34a12 12 0 0 0-16.380-.550A176 176 0 1 1 402.100 157.800l-101.530-4.870a12 12 0 0 0-12.570 12v47.410a12 12 0 0 0 12 12h200.330a12 12 0 0 0 12-12V12a12 12 0 0 0-12-12z"/></svg><span style="left:26px">刷新</span></div><div id="tw"><table id="tb"><colgroup><col style="width:50px"><col style="width:77px"><col style="width:57px"><col style="width:395px"><col style="width:57px"><col style="width:73px"><col style="width:395px"><col style="width:140px"><col style="width:115px"><col style="width:115px"><col style="width:115px"><col style="width:105px"><col style="width:195px"></colgroup>
<thead><tr><th><i class="cb"></i></th><th><span style="letter-spacing:0.25px;position:relative;top:1px">ID</span></th><th>上级</th><th>账号</th><th>备注</th><th>信用分</th><th>昵称</th><th><span style="letter-spacing:-0.641px;position:relative;top:1px">USDT</span>余额</th><th><span style="letter-spacing:-0.586px;position:relative;top:1px">USDC</span>余额</th><th><span style="letter-spacing:-1.297px;position:relative;top:1px">BTC</span>余额</th><th><span style="letter-spacing:-1.0px;position:relative;top:1px">ETH</span>余额</th><th>秒合约控制</th><th>登陆<span style="letter-spacing:-0.312px;position:relative;top:1px">IP</span></th></tr></thead><tbody>
<tr><td><i class="cb"></i></td><td><span style="letter-spacing:-0.064px;font-size:15.5px">369745</span></td><td></td><td><span style="letter-spacing:0.083px;font-size:15.5px">0xfd14536e26c5f4cd55f7812579255d2651d70950</span></td><td></td><td><span style="letter-spacing:-0.133px;font-size:15.5px">600</span></td><td><span style="letter-spacing:0.083px;font-size:15.5px">0xfd14536e26c5f4cd55f7812579255d2651d70950</span></td><td><span style="letter-spacing:-0.151px;font-size:15.5px">0.000000</span></td><td><span style="letter-spacing:-0.151px;font-size:15.5px">0.000000</span></td><td><span style="letter-spacing:-0.151px;font-size:15.5px">0.000000</span></td><td><span style="letter-spacing:-0.151px;font-size:15.5px">0.000000</span></td><td>无控制</td><td><span style="letter-spacing:-0.22px;font-size:15.5px">57.181.21.252</span></td></tr>
<tr><td><i class="cb"></i></td><td><span style="letter-spacing:-0.064px;font-size:15.5px">369744</span></td><td></td><td><span style="letter-spacing:0.073px;font-size:15.5px">0xeec1ab7b2347952be9c4f8abbe32dd4fb94e0c4a</span></td><td></td><td><span style="letter-spacing:-0.133px;font-size:15.5px">600</span></td><td><span style="letter-spacing:0.073px;font-size:15.5px">0xeec1ab7b2347952be9c4f8abbe32dd4fb94e0c4a</span></td><td><span style="letter-spacing:-0.109px;font-size:15.5px">1049.500000</span></td><td><span style="letter-spacing:-0.109px;font-size:15.5px">1000.000000</span></td><td><span style="letter-spacing:-0.109px;font-size:15.5px">1000.000000</span></td><td><span style="letter-spacing:-0.109px;font-size:15.5px">1000.000000</span></td><td>赢</td><td><span style="letter-spacing:-0.205px;font-size:15.5px">169.150.222.76</span></td></tr>
<tr><td><i class="cb"></i></td><td><span style="letter-spacing:-0.064px;font-size:15.5px">369743</span></td><td></td><td><span style="letter-spacing:0.085px;font-size:15.5px">0x566267a4df8549f5a3915e075b3b15f394d1e3f0</span></td><td></td><td><span style="letter-spacing:-0.133px;font-size:15.5px">600</span></td><td><span style="letter-spacing:0.085px;font-size:15.5px">0x566267a4df8549f5a3915e075b3b15f394d1e3f0</span></td><td><span style="letter-spacing:-0.151px;font-size:15.5px">0.000000</span></td><td><span style="letter-spacing:-0.151px;font-size:15.5px">0.000000</span></td><td><span style="letter-spacing:-0.151px;font-size:15.5px">0.000000</span></td><td><span style="letter-spacing:-0.151px;font-size:15.5px">0.000000</span></td><td>无控制</td><td><span style="letter-spacing:-0.205px;font-size:15.5px">169.150.222.76</span></td></tr>
<tr><td><i class="cb"></i></td><td><span style="letter-spacing:-0.064px;font-size:15.5px">369742</span></td><td></td><td><span style="letter-spacing:-0.071px;font-size:15.5px">0xF46035F66ba09A3c52Aee8e972bf148897dA249c</span></td><td></td><td><span style="letter-spacing:-0.133px;font-size:15.5px">600</span></td><td><span style="letter-spacing:-0.071px;font-size:15.5px">0xF46035F66ba09A3c52Aee8e972bf148897dA249c</span></td><td><span style="letter-spacing:-0.005px;font-size:15.5px">1196.525500</span></td><td><span style="letter-spacing:-0.151px;font-size:15.5px">0.000000</span></td><td><span style="letter-spacing:-0.151px;font-size:15.5px">0.000000</span></td><td><span style="letter-spacing:-0.151px;font-size:15.5px">0.000000</span></td><td>无控制</td><td><span style="letter-spacing:-0.262px;font-size:15.5px">67.4.143.75</span></td></tr>
<tr><td><i class="cb"></i></td><td><span style="letter-spacing:-0.064px;font-size:15.5px">369741</span></td><td></td><td><span style="letter-spacing:0.55px;font-size:15.5px">false</span></td><td></td><td><span style="letter-spacing:-0.133px;font-size:15.5px">600</span></td><td><span style="letter-spacing:0.55px;font-size:15.5px">false</span></td><td><span style="letter-spacing:-0.151px;font-size:15.5px">0.000000</span></td><td><span style="letter-spacing:-0.151px;font-size:15.5px">0.000000</span></td><td><span style="letter-spacing:-0.151px;font-size:15.5px">0.000000</span></td><td><span style="letter-spacing:-0.151px;font-size:15.5px">0.000000</span></td><td>无控制</td><td><span style="letter-spacing:-0.171px;font-size:15.5px">2001:4450:46bc:5000:81cc:a1f0</span></td></tr>
<tr><td><i class="cb"></i></td><td><span style="letter-spacing:-0.064px;font-size:15.5px">369740</span></td><td></td><td><span style="letter-spacing:-0.21px;font-size:15.5px">0x9B2C0a231CC126CA77b981BA334197DfCb668c4e</span></td><td></td><td><span style="letter-spacing:-0.133px;font-size:15.5px">600</span></td><td><span style="letter-spacing:-0.21px;font-size:15.5px">0x9B2C0a231CC126CA77b981BA334197DfCb668c4e</span></td><td><span style="letter-spacing:-0.084px;font-size:15.5px">9999476.689000</span></td><td><span style="letter-spacing:-0.151px;font-size:15.5px">0.000000</span></td><td><span style="letter-spacing:-0.151px;font-size:15.5px">0.000000</span></td><td><span style="letter-spacing:-0.151px;font-size:15.5px">0.025200</span></td><td>无控制</td><td><span style="letter-spacing:-0.148px;font-size:15.5px">2001:4450:46bc:5000:74cb:22e1</span></td></tr>
<tr class="hov"><td><i class="cb"></i></td><td><span style="letter-spacing:-0.064px;font-size:15.5px">369739</span></td><td></td><td><span style="letter-spacing:-0.022px;font-size:15.5px">0xb1782168D9bA63637b0c7e955e343d6a0D2e940E</span></td><td></td><td><span style="letter-spacing:-0.133px;font-size:15.5px">600</span></td><td><span style="letter-spacing:-0.022px;font-size:15.5px">0xb1782168D9bA63637b0c7e955e343d6a0D2e940E</span></td><td><span style="letter-spacing:-0.151px;font-size:15.5px">0.000000</span></td><td><span style="letter-spacing:-0.151px;font-size:15.5px">0.000000</span></td><td><span style="letter-spacing:-0.151px;font-size:15.5px">0.000000</span></td><td><span style="letter-spacing:-0.151px;font-size:15.5px">0.000000</span></td><td>无控制</td><td><span style="letter-spacing:-0.22px;font-size:15.5px">103.143.92.30</span></td></tr>
<tr><td><i class="cb"></i></td><td><span style="letter-spacing:-0.064px;font-size:15.5px">369738</span></td><td></td><td><span style="letter-spacing:-0.038px;font-size:15.5px">0x2dAb1C7a58c58de7c64bFDbA7BB3bf426D868229</span></td><td></td><td><span style="letter-spacing:-0.133px;font-size:15.5px">600</span></td><td><span style="letter-spacing:-0.038px;font-size:15.5px">0x2dAb1C7a58c58de7c64bFDbA7BB3bf426D868229</span></td><td><span style="letter-spacing:-0.151px;font-size:15.5px">0.000000</span></td><td><span style="letter-spacing:-0.151px;font-size:15.5px">0.000000</span></td><td><span style="letter-spacing:-0.151px;font-size:15.5px">0.000000</span></td><td><span style="letter-spacing:-0.151px;font-size:15.5px">0.000000</span></td><td>无控制</td><td><span style="letter-spacing:-0.133px;font-size:15.5px">3.105.204.113</span></td></tr>
<tr><td><i class="cb"></i></td><td><span style="letter-spacing:-0.064px;font-size:15.5px">369737</span></td><td></td><td><span style="letter-spacing:-0.119px;font-size:15.5px">0x9816eFBF7529424548a41bA5755D98B828dA2f09</span></td><td></td><td><span style="letter-spacing:-0.133px;font-size:15.5px">600</span></td><td><span style="letter-spacing:-0.119px;font-size:15.5px">0x9816eFBF7529424548a41bA5755D98B828dA2f09</span></td><td><span style="letter-spacing:-0.151px;font-size:15.5px">0.000000</span></td><td><span style="letter-spacing:-0.007px;font-size:15.5px">2.110000</span></td><td><span style="letter-spacing:-0.151px;font-size:15.5px">0.000000</span></td><td><span style="letter-spacing:-0.151px;font-size:15.5px">0.000000</span></td><td>无控制</td><td><span style="letter-spacing:-0.133px;font-size:15.5px">3.105.204.113</span></td></tr>
<tr><td><i class="cb"></i></td><td><span style="letter-spacing:-0.064px;font-size:15.5px">369736</span></td><td></td><td><span style="letter-spacing:-0.115px;font-size:15.5px">0xe933F1d20C1F863553cAc7b36B6006f3903b35a7</span></td><td></td><td><span style="letter-spacing:-0.133px;font-size:15.5px">600</span></td><td><span style="letter-spacing:-0.115px;font-size:15.5px">0xe933F1d20C1F863553cAc7b36B6006f3903b35a7</span></td><td><span style="letter-spacing:-0.151px;font-size:15.5px">0.000000</span></td><td><span style="letter-spacing:-0.151px;font-size:15.5px">0.000000</span></td><td><span style="letter-spacing:-0.151px;font-size:15.5px">0.000000</span></td><td><span style="letter-spacing:-0.151px;font-size:15.5px">0.000000</span></td><td>无控制</td><td><span style="letter-spacing:-0.133px;font-size:15.5px">3.105.204.113</span></td></tr>
</tbody></table></div>
<div id="sb"><div class="al"></div><div class="th"></div><div class="arr"></div></div>
<div id="cf">
<div class="abs" style="left:1284px;top:19px;font-size:13px;line-height:20px;white-space:nowrap;color:#212529">共256条记录</div>
<div class="abs" style="left:1364px;top:19px;font-size:13px;line-height:20px;white-space:nowrap;color:#212529">每页显示</div>
<div class="abs" style="left:1420px;top:15px;width:50px;height:25px;border:1px solid #767676;border-radius:3px;background:#fff"><span class="abs" style="left:5px;top:1px;font-size:15px;line-height:21px;color:#000">10</span><svg class="abs" style="right:6px;top:7px" width="10" height="8" viewBox="0 0 10 8"><path d="M1 1.500l4 4 4-4" fill="none" stroke="#000" stroke-width="1.800"/></svg></div>
<div class="abs" style="left:1475px;top:19px;font-size:13px;line-height:20px;white-space:nowrap;color:#212529">条记录</div>
<div id="pg">
<div class="pi first dis" style="left:0px;width:25px">«</div>
<div class="pi on" style="left:24px;width:27px">1</div>
<div class="pi" style="left:50px;width:25px">2</div>
<div class="pi" style="left:74px;width:25px">3</div>
<div class="pi" style="left:98px;width:26px">4</div>
<div class="pi" style="left:123px;width:25px">5</div>
<div class="pi" style="left:147px;width:26px">6</div>
<div class="pi" style="left:172px;width:26px">7</div>
<div class="pi" style="left:197px;width:25px">8</div>
<div class="pi dis" style="left:221px;width:28px">...</div>
<div class="pi" style="left:248px;width:32px">25</div>
<div class="pi" style="left:279px;width:33px">26</div>
<div class="pi last" style="left:311px;width:25px">»</div>
</div></div></div>
<div id="footer">
 <div class="abs" style="left:16px;top:17.300px;line-height:24px;white-space:nowrap"><b>Copyright © 2024 <span style="color:#007bff">EDX.</span></b> All rights reserved.</div>
 <div class="abs" style="right:16px;top:17.300px;line-height:24px;white-space:nowrap"><b><span style="letter-spacing:-0.402px">Version</span></b> 10</div>
</div>
<div id="osbar"><i style="left:1071px;top:5px;width:6px;height:3px;background:#8e3fa8;border-radius:2px 2px 0 0"></i><i style="left:1089px;top:4px;width:37px;height:4px;background:#f3f5fb;border-radius:3px 3px 0 0"></i><i style="left:1114px;top:5px;width:6px;height:3px;background:#8e3fa8;border-radius:2px 2px 0 0"></i></div>
</body>
</html>
